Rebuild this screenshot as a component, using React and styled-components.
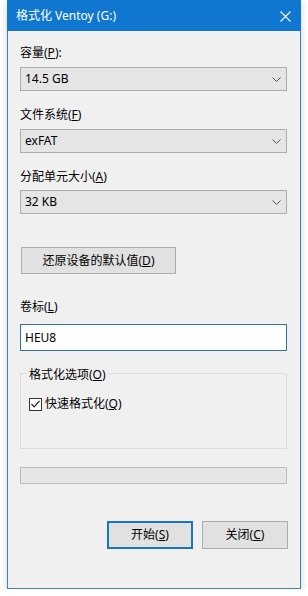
import React from 'react';
import styled, { createGlobalStyle } from 'styled-components';

const GlobalStyle = createGlobalStyle`
    html, body {
        margin: 0;
        padding: 0;
        background: #ffffff;
    }
    body {
        font-family: "Noto Sans", "Noto Sans CJK SC", sans-serif;
        font-size: 12px;
        color: #000;
    }
`;

const Window = styled.div`
    box-sizing: border-box;
    width: 294px;
    height: 589px;
    margin-left: 7px;
    background: #f0f0f0;
    border: 1px solid #3f7fc2;
    border-top: none;
    box-shadow: 0 2px 8px rgba(0, 0, 0, 0.18);
    display: flex;
    flex-direction: column;
`;

const TitleBar = styled.div`
    height: 31px;
    flex: none;
    margin: 0 -1px;
    background: #0f77d0;
    color: #fff;
    display: flex;
    align-items: center;
    justify-content: space-between;
    padding: 0 10px 0 9px;
`;

const TitleText = styled.span`
    font-size: 12px;
    line-height: 16px;
    padding-top: 1px;
`;

const CloseIcon = styled.svg`
    width: 11px;
    height: 11px;
    margin-top: 1px;
`;

const Body = styled.div`
    display: flex;
    flex-direction: column;
    width: 267px;
    margin-left: 12px;
`;

const Label = styled.div`
    line-height: 16px;
    height: 16px;
    margin-top: ${(p) => p.$mt || 0}px;
    white-space: nowrap;
`;

const Select = styled.div`
    box-sizing: border-box;
    height: 24px;
    margin-top: ${(p) => p.$mt || 0}px;
    background: #e5e5e5;
    border: 1px solid #adadad;
    display: flex;
    align-items: center;
    justify-content: space-between;
    padding: 0 5px 0 4px;
    line-height: 16px;
`;

const Chevron = styled.svg`
    width: 9px;
    height: 5px;
`;

const Button = styled.div`
    box-sizing: border-box;
    width: ${(p) => p.$w}px;
    height: ${(p) => p.$h}px;
    margin-top: ${(p) => p.$mt || 0}px;
    margin-left: ${(p) => p.$ml || 0}px;
    background: #e1e1e1;
    border: ${(p) => (p.$default ? '2px solid #2373b4' : '1px solid #adadad')};
    box-shadow: ${(p) => (p.$default ? 'inset 0 0 0 1px #cfe8f8' : 'none')};
    display: flex;
    align-items: center;
    justify-content: center;
    line-height: 16px;
    white-space: nowrap;
`;

const TextInput = styled.div`
    box-sizing: border-box;
    height: 27px;
    margin-top: ${(p) => p.$mt || 0}px;
    background: #fff;
    border: 1px solid #2f72b3;
    display: flex;
    align-items: center;
    padding-left: 4px;
    line-height: 16px;
`;

const GroupBox = styled.div`
    position: relative;
    box-sizing: border-box;
    height: 76px;
    margin-top: ${(p) => p.$mt || 0}px;
    border: 1px solid #dcdcdc;
    padding: 0 0 0 8px;
`;

const Legend = styled.span`
    position: absolute;
    top: -7px;
    left: 6px;
    padding: 0 2px;
    background: #f0f0f0;
    line-height: 16px;
`;

const CheckRow = styled.div`
    display: flex;
    align-items: center;
    margin-top: 22px;
    line-height: 16px;
`;

const CheckBox = styled.div`
    box-sizing: border-box;
    width: 13px;
    height: 13px;
    border: 1px solid #333;
    background: #fff;
    margin-right: 3px;
    display: flex;
    align-items: center;
    justify-content: center;
`;

const Progress = styled.div`
    box-sizing: border-box;
    height: 17px;
    margin-top: ${(p) => p.$mt || 0}px;
    background: #e6e6e6;
    border: 1px solid #bcbcbc;
`;

const ButtonRow = styled.div`
    display: flex;
    justify-content: flex-end;
    gap: 9px;
    margin-right: -1px;
    margin-top: ${(p) => p.$mt || 0}px;
`;

const DownArrow = () => (
    <Chevron viewBox="0 0 9 5">
        <polyline points="0.5,0.5 4.5,4.5 8.5,0.5" fill="none" stroke="#555" strokeWidth="1" />
    </Chevron>
);

const Combo = ({ value, mt }) => (
    <Select $mt={mt}>
        <span>{value}</span>
        <DownArrow />
    </Select>
);

const App = () => {
    return (
        <>
            <GlobalStyle />
            <Window>
                <TitleBar>
                    <TitleText>格式化 Ventoy (G:)</TitleText>
                    <CloseIcon viewBox="0 0 11 11">
                        <path d="M0.5 0.5 L10.5 10.5 M10.5 0.5 L0.5 10.5" stroke="#fff" strokeWidth="1.1" fill="none" />
                    </CloseIcon>
                </TitleBar>
                <Body>
                    <Label $mt={14}>容量(<u>P</u>):</Label>
                    <Combo mt={6} value="14.5 GB" />

                    <Label $mt={16}>文件系统(<u>F</u>)</Label>
                    <Combo mt={6} value="exFAT" />

                    <Label $mt={16}>分配单元大小(<u>A</u>)</Label>
                    <Combo mt={5} value="32 KB" />

                    <Button $w={155} $h={27} $mt={33} $ml={1}>
                        还原设备的默认值(<u>D</u>)
                    </Button>

                    <Label $mt={25}>卷标(<u>L</u>)</Label>
                    <TextInput $mt={9}>HEU8</TextInput>

                    <GroupBox $mt={22}>
                        <Legend>格式化选项(<u>O</u>)</Legend>
                        <CheckRow>
                            <CheckBox>
                                <svg width="9" height="8" viewBox="0 0 9 8">
                                    <polyline points="0.5,4 3.2,6.8 8.5,0.8" fill="none" stroke="#222" strokeWidth="1.2" />
                                </svg>
                            </CheckBox>
                            快速格式化(<u>Q</u>)
                        </CheckRow>
                    </GroupBox>

                    <Progress $mt={18} />

                    <ButtonRow $mt={37}>
                        <Button $w={86} $h={28} $default>开始(<u>S</u>)</Button>
                        <Button $w={86} $h={28}>关闭(<u>C</u>)</Button>
                    </ButtonRow>
                </Body>
            </Window>
        </>
    );
};

export default App;
